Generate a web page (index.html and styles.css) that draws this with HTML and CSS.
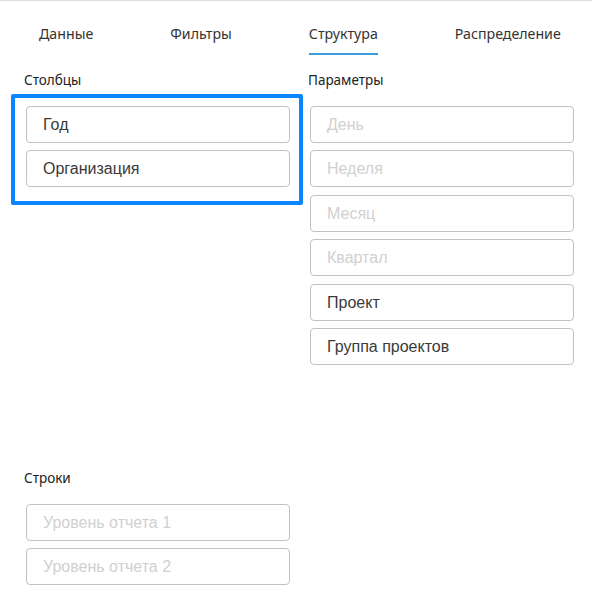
FILE: index.html
```html
<!DOCTYPE html>
<html lang="ru">
<head>
<meta charset="utf-8">
<link rel="stylesheet" href="styles.css">
</head>
<body>
<div class="page">
  <nav class="tabs">
    <div class="tab">Данные</div>
    <div class="tab">Фильтры</div>
    <div class="tab active">Структура</div>
    <div class="tab">Распределение</div>
  </nav>
  <div class="content">
    <div class="col">
      <div class="label">Столбцы</div>
      <div class="dropzone">
        <div class="item">Год</div>
        <div class="item">Организация</div>
      </div>
      <div class="label rows-label">Строки</div>
      <div class="list">
        <div class="item muted">Уровень отчета 1</div>
        <div class="item muted">Уровень отчета 2</div>
      </div>
    </div>
    <div class="col">
      <div class="label">Параметры</div>
      <div class="list params">
        <div class="item muted">День</div>
        <div class="item muted">Неделя</div>
        <div class="item muted">Месяц</div>
        <div class="item muted">Квартал</div>
        <div class="item">Проект</div>
        <div class="item">Группа проектов</div>
      </div>
    </div>
  </div>
</div>
</body>
</html>
```

FILE: styles.css
```css
html, body {
  margin: 0;
  padding: 0;
  background: #fff;
}
.page {
  border-top: 1px solid #dedede;
  font-family: "Noto Sans", "Liberation Sans", sans-serif;
  color: #333;
}
.tabs {
  display: flex;
  gap: 77px;
  padding: 0 0 0 39px;
}
.tab {
  font-size: 14.2px;
  line-height: 20px;
  padding: 23px 0 9px;
  border-bottom: 2px solid transparent;
  color: #333;
}
.tab.active {
  border-bottom-color: #3d9be0;
}
.content {
  display: flex;
  gap: 20px;
  padding: 16px 0 0 26px;
}
.col {
  width: 264px;
  display: flex;
  flex-direction: column;
}
.label {
  font-size: 13.5px;
  line-height: 18px;
  color: #222;
  margin-left: -2px;
}
.dropzone {
  margin: 5px -13px 0 -15px;
  border: 4px solid #0a84ff;
  border-radius: 2px;
  padding: 8px 9px 14px 11px;
  display: flex;
  flex-direction: column;
  gap: 7px;
}
.list {
  display: flex;
  flex-direction: column;
  gap: 7px;
  margin-top: 17px;
}
.list.params {
  gap: 7.4px;
}
.rows-label {
  margin-top: 264px;
}
.item {
  box-sizing: border-box;
  height: 37px;
  border: 1px solid #c2c2c2;
  border-radius: 4px;
  padding: 1px 0 0 16px;
  display: flex;
  align-items: center;
  font-family: "Liberation Sans", Arial, sans-serif;
  font-size: 16px;
  color: #3a3a3a;
}
.item.muted {
  color: #d0d0d0;
}
```
